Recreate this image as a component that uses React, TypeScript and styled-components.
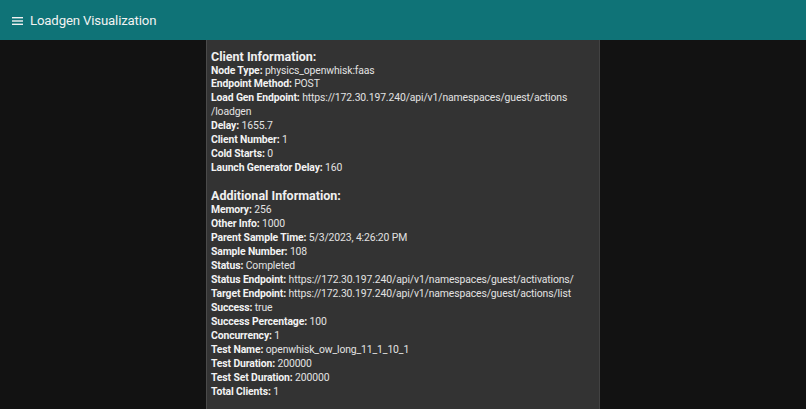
import React from "react";
import styled, { createGlobalStyle } from "styled-components";

const Global = createGlobalStyle`
  html, body { margin: 0; padding: 0; background: #121212; }
  body { font-family: Roboto, "Noto Sans", "DejaVu Sans", sans-serif; color: #e6e6e6; }
`;

const Page = styled.div`
  display: flex;
  flex-direction: column;
  height: 409px;
  overflow: hidden;
  background: #121212;
`;

const AppBar = styled.header`
  flex: 0 0 40px;
  height: 40px;
  box-sizing: border-box;
  background: #0f7377;
  display: flex;
  align-items: center;
  padding: 0 12px;
  gap: 7px;
`;

const MenuIcon = styled.svg`
  width: 11px;
  height: 8px;
  display: block;
  margin-top: 1px;
`;

const Title = styled.h1`
  margin: 0;
  font-size: 13.2px;
  font-weight: 400;
  color: #f2f2f2;
  letter-spacing: -0.15px;
`;

const Main = styled.main`
  flex: 1;
  display: flex;
  justify-content: center;
  min-height: 0;
`;

const Panel = styled.section`
  width: 394px;
  box-sizing: border-box;
  background: #333333;
  border-left: 1px solid #4a4a4a;
  border-right: 1px solid #424242;
  padding: 8.5px 4px 0 4px;
`;

const SectionTitle = styled.h2<{ $first?: boolean }>`
  margin: ${(p) => (p.$first ? "0" : "13px")} 0 0 0;
  font-size: 12.5px;
  line-height: 15px;
  font-weight: 700;
  color: #f0f0f0;
`;

const Row = styled.div`
  font-size: 10.4px;
  line-height: 13.95px;
  letter-spacing: -0.12px;
  white-space: nowrap;
  color: #e2e2e2;
`;

const Label = styled.span`
  font-weight: 700;
  color: #f2f2f2;
`;

const client: [string, React.ReactNode][] = [
  ["Node Type", "physics_openwhisk:faas"],
  ["Endpoint Method", "POST"],
  [
    "Load Gen Endpoint",
    <>
      https://172.30.197.240/api/v1/namespaces/guest/actions
      <br />
      /loadgen
    </>,
  ],
  ["Delay", "1655.7"],
  ["Client Number", "1"],
  ["Cold Starts", "0"],
  ["Launch Generator Delay", "160"],
];

const additional: [string, string][] = [
  ["Memory", "256"],
  ["Other Info", "1000"],
  ["Parent Sample Time", "5/3/2023, 4:26:20 PM"],
  ["Sample Number", "108"],
  ["Status", "Completed"],
  ["Status Endpoint", "https://172.30.197.240/api/v1/namespaces/guest/activations/"],
  ["Target Endpoint", "https://172.30.197.240/api/v1/namespaces/guest/actions/list"],
  ["Success", "true"],
  ["Success Percentage", "100"],
  ["Concurrency", "1"],
  ["Test Name", "openwhisk_ow_long_11_1_10_1"],
  ["Test Duration", "200000"],
  ["Test Set Duration", "200000"],
  ["Total Clients", "1"],
];

export default function App() {
  return (
    <>
      <Global />
      <Page>
        <AppBar>
          <MenuIcon viewBox="0 0 11 8">
            <rect x="0" y="0" width="11" height="1.4" fill="#f2f2f2" />
            <rect x="0" y="3.3" width="11" height="1.4" fill="#f2f2f2" />
            <rect x="0" y="6.6" width="11" height="1.4" fill="#f2f2f2" />
          </MenuIcon>
          <Title>Loadgen Visualization</Title>
        </AppBar>
        <Main>
          <Panel>
            <SectionTitle $first>Client Information:</SectionTitle>
            {client.map(([k, v]) => (
              <Row key={k}>
                <Label>{k}:</Label> {v}
              </Row>
            ))}
            <SectionTitle>Additional Information:</SectionTitle>
            {additional.map(([k, v]) => (
              <Row key={k}>
                <Label>{k}:</Label> {v}
              </Row>
            ))}
          </Panel>
        </Main>
      </Page>
    </>
  );
}
